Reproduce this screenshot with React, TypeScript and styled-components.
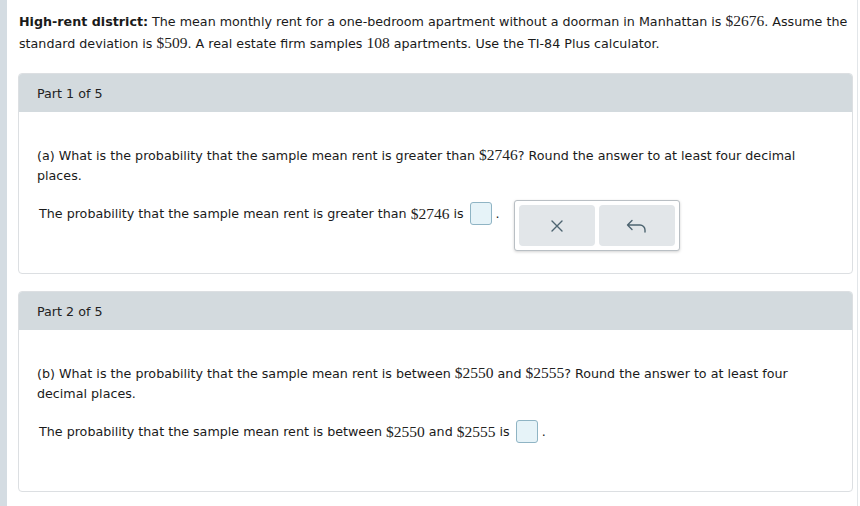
import React from "react";
import styled, { createGlobalStyle } from "styled-components";

const Global = createGlobalStyle`
  html, body { margin: 0; padding: 0; background: #fff; }
  body { font-family: "DejaVu Sans", Verdana, sans-serif; color: #1a1a1a; }
`;

const Page = styled.div`
  display: flex;
  width: 860px;
  height: 506px;
  overflow: hidden;
`;

const SideBar = styled.div`
  width: 7px;
  flex: none;
  background: #d4dce2;
`;

const Main = styled.div`
  flex: 1;
  padding: 11px 4px 0 11px;
  border-right: 1px solid #e2e6e9;
  margin-right: 2px;
`;

const Intro = styled.p`
  margin: 0 0 18px 1px;
  font-size: 12.7px;
  line-height: 22px;
`;

const Num = styled.span`
  font-family: "Liberation Serif", "Times New Roman", serif;
  font-size: 15.5px;
  line-height: 1;
  color: #222;
`;

const Card = styled.section`
  width: 833px;
  border: 1px solid #dcdfe2;
  border-radius: 4px;
  margin-bottom: 17px;
  overflow: hidden;
`;

const CardHeader = styled.div`
  height: 38px;
  display: flex;
  align-items: center;
  padding-left: 18px;
  background: #d3dade;
  font-size: 12.7px;
  color: #222;
`;

const CardBody = styled.div`
  padding: 34px 18px 0 18px;
  height: 161px;
  box-sizing: border-box;
`;

const Question = styled.p`
  margin: 0 0 14px 0;
  font-size: 12.7px;
  line-height: 20px;
`;

const AnswerRow = styled.div`
  display: flex;
  align-items: flex-start;
  padding-left: 2px;
`;

const AnswerText = styled.div`
  font-size: 12.7px;
  line-height: 20px;
  padding-top: 2px;
  display: flex;
  align-items: center;
`;

const InputBox = styled.span`
  display: inline-block;
  width: 20px;
  height: 21px;
  margin-left: 6px;
  border: 1px solid #8fb4c4;
  border-radius: 3px;
  background: #e6f3f8;
`;

const Dot = styled.span`
  margin-left: 4px;
`;

const Keypad = styled.div`
  display: flex;
  gap: 4px;
  margin-left: 14px;
  margin-top: 0;
  padding: 4px;
  border: 1px solid #b9bfc4;
  border-radius: 3px;
  background: #fff;
  box-shadow: 0 1px 3px rgba(0, 0, 0, 0.18);
`;

const KeyButton = styled.div`
  width: 76px;
  height: 41px;
  border-radius: 4px;
  background: #e2e6e9;
  display: flex;
  align-items: center;
  justify-content: center;
`;

const ClearIcon = () => (
  <svg width="14" height="14" viewBox="0 0 14 14">
    <path d="M2 2 L12 12 M12 2 L2 12" stroke="#4d6470" strokeWidth="1.4" fill="none" strokeLinecap="round" />
  </svg>
);

const UndoIcon = () => (
  <svg width="24" height="16" viewBox="0 0 24 16">
    <path
      d="M7 2.5 L2.5 7 L7 11.5 M2.5 7 H15 a5 5 0 0 1 5 5 V14"
      stroke="#4d6470"
      strokeWidth="1.4"
      fill="none"
      strokeLinecap="round"
      strokeLinejoin="round"
    />
  </svg>
);

export default function App() {
  return (
    <>
      <Global />
      <Page>
        <SideBar />
        <Main>
          <Intro>
            <b>High-rent district:</b> The mean monthly rent for a one-bedroom apartment without a doorman in Manhattan is{" "}
            <Num>$2676</Num>. Assume the standard deviation is <Num>$509</Num>. A real estate firm samples <Num>108</Num>{" "}
            apartments. Use the TI-84 Plus calculator.
          </Intro>

          <Card>
            <CardHeader>Part 1 of 5</CardHeader>
            <CardBody>
              <Question>
                (a) What is the probability that the sample mean rent is greater than <Num>$2746</Num>? Round the answer to at least
                four decimal places.
              </Question>
              <AnswerRow>
                <AnswerText>
                  The probability that the sample mean rent is greater than&nbsp;<Num>$2746</Num>&nbsp;is
                  <InputBox />
                  <Dot>.</Dot>
                </AnswerText>
                <Keypad>
                  <KeyButton>
                    <ClearIcon />
                  </KeyButton>
                  <KeyButton>
                    <UndoIcon />
                  </KeyButton>
                </Keypad>
              </AnswerRow>
            </CardBody>
          </Card>

          <Card>
            <CardHeader>Part 2 of 5</CardHeader>
            <CardBody>
              <Question>
                (b) What is the probability that the sample mean rent is between <Num>$2550</Num> and <Num>$2555</Num>? Round the
                answer to at least four decimal places.
              </Question>
              <AnswerRow>
                <AnswerText>
                  The probability that the sample mean rent is between&nbsp;<Num>$2550</Num>&nbsp;and&nbsp;<Num>$2555</Num>&nbsp;is
                  <InputBox />
                  <Dot>.</Dot>
                </AnswerText>
              </AnswerRow>
            </CardBody>
          </Card>
        </Main>
      </Page>
    </>
  );
}
